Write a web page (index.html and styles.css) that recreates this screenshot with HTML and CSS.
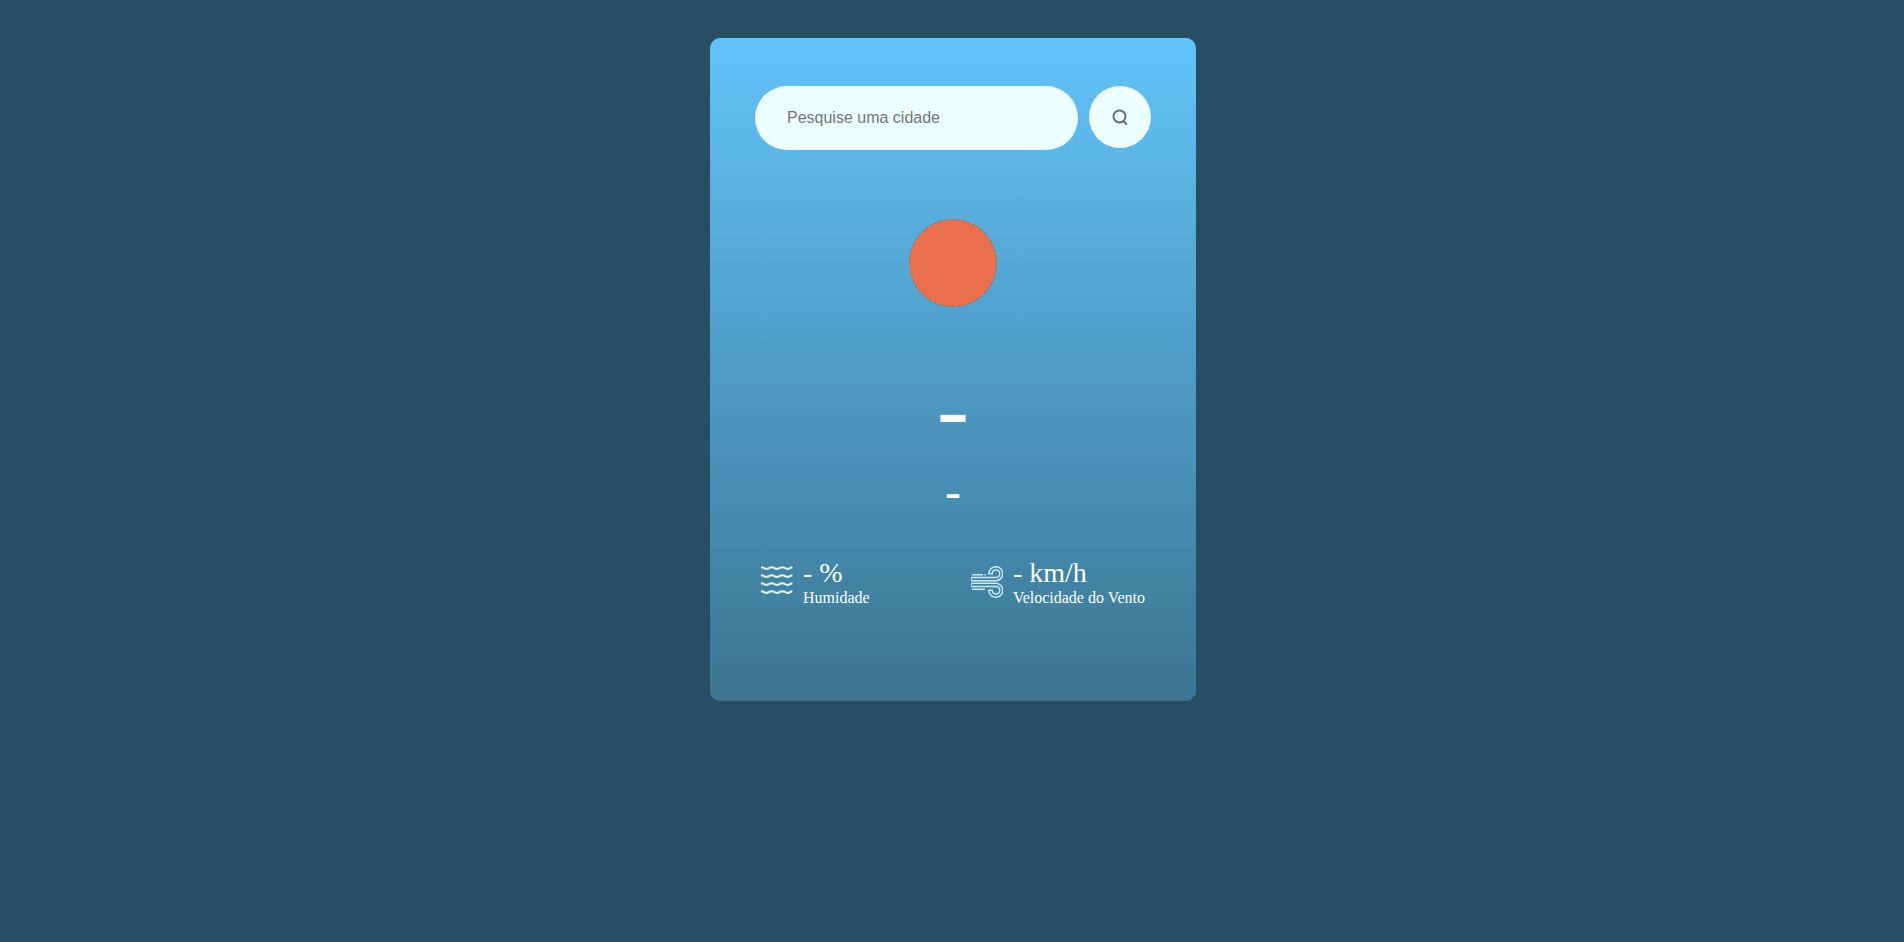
FILE: index.html
```html
<!DOCTYPE html>
<html lang="pt-BR">
<head>
<meta charset="utf-8">
<meta name="viewport" content="width=device-width, initial-scale=1">
<title>Clima</title>
<link rel="stylesheet" href="styles.css">
</head>
<body>
<main class="card">
  <form class="search">
    <input class="search-input" type="text" placeholder="Pesquise uma cidade" aria-label="Pesquise uma cidade">
    <button class="search-button" type="button" aria-label="Pesquisar">
      <svg class="search-icon" viewBox="0 0 16 18" aria-hidden="true"><circle cx="7.5" cy="8.5" r="6"/><path d="M11 12.8l3.800 3.700"/></svg>
    </button>
  </form>
  <section class="weather">
    <div class="weather-icon"></div>
    <h1 class="temperature">-</h1>
    <h2 class="city">-</h2>
  </section>
  <section class="details">
    <div class="detail">
      <svg class="detail-icon waves" viewBox="0 0 32 32" aria-hidden="true">
        <path d="M0 1.2c3 0 3 1.8 5.3 1.8S8 1.2 10.6 1.2 13.6 3 16 3s2.7-1.8 5.3-1.8S24.300 3 26.600 3 29 1.200 31.500 1.200"/>
        <path d="M0 9.200c3 0 3 1.800 5.300 1.800S8 9.200 10.600 9.200 13.600 11 16 11s2.700-1.800 5.300-1.800S24.300 11 26.600 11 29 9.200 31.500 9.200"/>
        <path d="M0 17.200c3 0 3 1.800 5.300 1.800S8 17.200 10.600 17.200 13.600 19 16 19s2.700-1.800 5.300-1.800S24.300 19 26.600 19 29 17.200 31.500 17.200"/>
        <path d="M0 25.200c3 0 3 1.800 5.300 1.800S8 25.200 10.600 25.200 13.600 27 16 27s2.700-1.800 5.300-1.800S24.300 27 26.600 27 29 25.200 31.500 25.200"/>
      </svg>
      <div>
        <p class="value">- %</p>
        <p class="label">Humidade</p>
      </div>
    </div>
    <div class="detail">
      <svg class="detail-icon wind" viewBox="0 0 32 32" aria-hidden="true">
        <path d="M1.500 11.500H25a3.800 3.800 0 1 0-3.800-3.800H17.800a7 7 0 1 1 7 7H1.500a1.600 1.600 0 0 1 0-3.200z"/>
        <path d="M1.500 17.300H25a7 7 0 1 1-7.200 7H21.200a3.800 3.800 0 1 0 3.800-3.800H1.500a1.600 1.600 0 0 1 0-3.200z"/>
        <path d="M1 8.700h11M13.500 8.700h1.500M1 23.300h13"/>
      </svg>
      <div>
        <p class="value">- km/h</p>
        <p class="label">Velocidade do Vento</p>
      </div>
    </div>
  </section>
</main>
</body>
</html>
```
FILE: styles.css
```css
* {
  box-sizing: border-box;
  margin: 0;
}

body {
  padding: 38px 16px 38px 18px;
  background: #284e63;
  font-family: "Liberation Serif", "Times New Roman", serif;
  color: #fff;
}

.card {
  max-width: 486px;
  margin: 0 auto;
  padding: 48px 45px 94px;
  border-radius: 10px;
  background: linear-gradient(#62c3f9, #3b7592);
}

.search {
  display: flex;
  align-items: flex-start;
  gap: 11px;
}

.search-input {
  flex: 1;
  min-width: 0;
  height: 64px;
  padding: 0 32px;
  border: 0;
  border-radius: 32px;
  background: #ebfffc;
  color: #555;
  font: 16px "Liberation Sans", Arial, sans-serif;
}

.search-input::placeholder {
  color: #757575;
}

.search-button {
  display: flex;
  align-items: center;
  justify-content: center;
  width: 62px;
  height: 62px;
  padding: 0;
  border: 0;
  border-radius: 50%;
  background: #ebfffc;
}

.search-icon {
  width: 16px;
  height: 18px;
  fill: none;
  stroke: #667078;
  stroke-width: 2;
}

.weather {
  display: flex;
  flex-direction: column;
  align-items: center;
  padding-top: 69px;
}

.weather-icon {
  width: 88px;
  height: 88px;
  border: 1px dashed #7c7470;
  border-radius: 50%;
  background: #ea704d;
}

.temperature {
  margin-top: 46px;
  font-size: 96px;
  font-weight: 500;
  line-height: 112px;
}

.city {
  font-size: 48px;
  font-weight: 500;
  line-height: 54px;
}

.details {
  display: flex;
  justify-content: space-between;
  margin-top: 38px;
  padding: 0 6px;
}

.detail {
  display: flex;
  align-items: flex-start;
  gap: 10px;
}

.detail-icon {
  width: 32px;
  height: 32px;
  margin-top: 9px;
  fill: none;
}

.waves {
  stroke: #e6f7fd;
  stroke-width: 2;
}

.wind {
  stroke: #c4eafa;
  stroke-width: 1.5;
}

.value {
  font-size: 28px;
  line-height: 32px;
}

.label {
  font-size: 16px;
  line-height: 18px;
}
```
